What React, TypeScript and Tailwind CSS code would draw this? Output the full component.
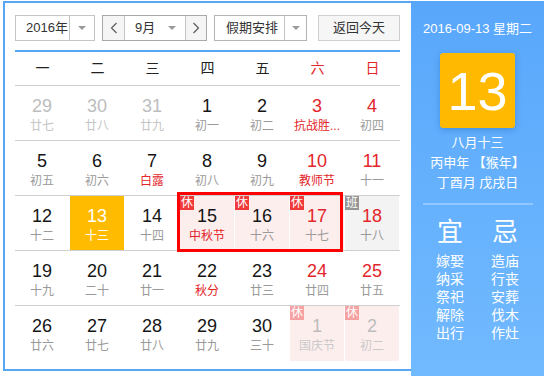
import React from "react";

type Cell = {
  d: string;
  l: string;
  n: string;
  lc: string;
  bg?: string;
  badge?: "xiu" | "ban" | "xiuF";
};

const K = "text-[#151515]";
const R = "text-[#e3262b]";
const P = "text-[#bdbdbd]";
const G = "text-[#9a9a9a]";
const PL = "text-[#c6c6c6]";
const W = "text-white";

const rows: Cell[][] = [
  [
    { d: "29", l: "廿七", n: P, lc: PL },
    { d: "30", l: "廿八", n: P, lc: PL },
    { d: "31", l: "廿九", n: P, lc: PL },
    { d: "1", l: "初一", n: K, lc: G },
    { d: "2", l: "初二", n: K, lc: G },
    { d: "3", l: "抗战胜...", n: R, lc: R },
    { d: "4", l: "初四", n: R, lc: G },
  ],
  [
    { d: "5", l: "初五", n: K, lc: G },
    { d: "6", l: "初六", n: K, lc: G },
    { d: "7", l: "白露", n: K, lc: R },
    { d: "8", l: "初八", n: K, lc: G },
    { d: "9", l: "初九", n: K, lc: G },
    { d: "10", l: "教师节", n: R, lc: R },
    { d: "11", l: "十一", n: R, lc: G },
  ],
  [
    { d: "12", l: "十二", n: K, lc: G },
    { d: "13", l: "十三", n: W, lc: W, bg: "bg-[#ffbb00]" },
    { d: "14", l: "十四", n: K, lc: G },
    { d: "15", l: "中秋节", n: K, lc: R, bg: "bg-[#fdeeee]", badge: "xiu" },
    { d: "16", l: "十六", n: K, lc: G, bg: "bg-[#fdeeee]", badge: "xiu" },
    { d: "17", l: "十七", n: R, lc: G, bg: "bg-[#fdeeee]", badge: "xiu" },
    { d: "18", l: "十八", n: R, lc: G, bg: "bg-[#f3f3f3]", badge: "ban" },
  ],
  [
    { d: "19", l: "十九", n: K, lc: G },
    { d: "20", l: "二十", n: K, lc: G },
    { d: "21", l: "廿一", n: K, lc: G },
    { d: "22", l: "秋分", n: K, lc: R },
    { d: "23", l: "廿三", n: K, lc: G },
    { d: "24", l: "廿四", n: R, lc: G },
    { d: "25", l: "廿五", n: R, lc: G },
  ],
  [
    { d: "26", l: "廿六", n: K, lc: G },
    { d: "27", l: "廿七", n: K, lc: G },
    { d: "28", l: "廿八", n: K, lc: G },
    { d: "29", l: "廿九", n: K, lc: G },
    { d: "30", l: "三十", n: K, lc: G },
    { d: "1", l: "国庆节", n: "text-[#bcbcbc]", lc: "text-[#c9c9c9]", bg: "bg-[#fdeeee]", badge: "xiuF" },
    { d: "2", l: "初二", n: "text-[#bcbcbc]", lc: "text-[#c9c9c9]", bg: "bg-[#fdeeee]", badge: "xiuF" },
  ],
];

const weekdays = ["一", "二", "三", "四", "五", "六", "日"];

function Arrow() {
  return <span className="block w-0 h-0 border-x-[4px] border-x-transparent border-t-[4px] border-t-[#9a9a9a]" />;
}

function Chevron({ dir }: { dir: "l" | "r" }) {
  return (
    <svg width="8" height="12" viewBox="0 0 8 12" fill="none">
      {dir === "l" ? (
        <polyline points="6.5,1 1.5,6 6.5,11" stroke="#555" strokeWidth="1.1" />
      ) : (
        <polyline points="1.5,1 6.5,6 1.5,11" stroke="#555" strokeWidth="1.1" />
      )}
    </svg>
  );
}

function Badge({ kind }: { kind: "xiu" | "ban" | "xiuF" }) {
  const cls =
    kind === "xiu"
      ? "bg-[#f03a3a]"
      : kind === "ban"
      ? "bg-[#949494]"
      : "bg-[#f6a2a2]";
  return (
    <span
      className={`absolute left-0 top-0 w-[14px] h-[14px] ${cls} text-white text-[12px] leading-[14px] flex items-center justify-center`}
    >
      {kind === "ban" ? "班" : "休"}
    </span>
  );
}

export default function App() {
  return (
    <div className="w-[544px] h-[376px] bg-white overflow-hidden font-['Liberation_Sans','Noto_Sans_CJK_SC',sans-serif]">
      <div className="ml-[3px] mt-[1px] w-[541px] h-[375px] border-t-2 border-[#58a6f6] flex">
        {/* Left area */}
        <div className="w-[408px] h-[368px] border-l-2 border-b-2 border-[#58a6f6] pl-[10px] pt-[12px] box-border">
          {/* Controls */}
          <div className="flex h-[26px] text-[13px] text-[#333]">
            <div className="w-[80px] h-full border border-[#c4c4c4] flex">
              <div className="flex-1 flex items-center pl-[10px]">2016年</div>
              <div className="w-[25px] border-l border-[#c4c4c4] flex items-center justify-center">
                <Arrow />
              </div>
            </div>
            <div className="ml-[7px] w-[105px] h-full border border-[#a9a9a9] flex">
              <div className="w-[22px] bg-[#f5f5f5] border-r border-[#c4c4c4] flex items-center justify-center">
                <Chevron dir="l" />
              </div>
              <div className="w-[60px] flex items-center pl-[10px] pr-[9px] justify-between">
                <span>9月</span>
                <Arrow />
              </div>
              <div className="flex-1 bg-[#f5f5f5] border-l border-[#c4c4c4] flex items-center justify-center">
                <Chevron dir="r" />
              </div>
            </div>
            <div className="ml-[7px] w-[93px] h-full border border-[#b4b4b4] flex">
              <div className="flex-1 flex items-center pl-[11px]">假期安排</div>
              <div className="w-[22px] border-l border-[#c4c4c4] flex items-center justify-center">
                <Arrow />
              </div>
            </div>
            <div className="ml-[11px] w-[82px] h-full border border-[#cfcfcf] bg-[#f6f6f6] flex items-center justify-center">
              返回今天
            </div>
          </div>

          {/* Blue line */}
          <div className="mt-[9px] w-[385px] h-[2px] bg-[#58a6f6]" />

          {/* Grid */}
          <div className="relative w-[385px]">
            <div className="grid grid-cols-[repeat(7,55px)] h-[34px] border-b border-[#cfcfcf] text-[14px]">
              {weekdays.map((w, i) => (
                <div
                  key={w}
                  className={`flex items-center justify-center ${i >= 5 ? "text-[#e3262b]" : "text-[#222]"}`}
                >
                  {w}
                </div>
              ))}
            </div>
            {rows.map((row, ri) => (
              <div
                key={ri}
                className={`grid grid-cols-[repeat(7,55px)] h-[55px] ${ri < rows.length - 1 ? "border-b border-[#cfcfcf]" : ""}`}
              >
                {row.map((c, ci) => (
                  <div
                    key={ci}
                    className={`relative w-[54px] h-full flex flex-col items-center pt-[9px] ${c.bg ?? ""}`}
                  >
                    {c.badge && <Badge kind={c.badge} />}
                    <span className={`text-[18px] leading-[22px] ${c.n}`}>{c.d}</span>
                    <span className={`text-[12px] leading-[18px] whitespace-nowrap ${c.lc}`}>{c.l}</span>
                  </div>
                ))}
              </div>
            ))}
            {/* selection box */}
            <div className="absolute left-[162px] top-[140px] w-[166px] h-[60px] border-[3px] border-[#ff0000] pointer-events-none" />
          </div>
        </div>

        {/* Right panel */}
        <div className="w-[133px] h-[376px] -mt-[2px] pt-[2px] bg-linear-to-b from-[#58a7fb] to-[#72baff] text-white flex flex-col items-center">
          <div className="mt-[17px] text-[13px] leading-[18px]">2016-09-13 星期二</div>
          <div className="mt-[15px] w-[75px] h-[75px] rounded-[3px] bg-[#ffb900] shadow-[0_2px_6px_rgba(0,60,140,0.25)] flex items-center justify-center text-[54px] leading-none">
            13
          </div>
          <div className="mt-[5px] text-[13px] leading-[20px] text-center">
            <div>八月十三</div>
            <div>丙申年 【猴年】</div>
            <div>丁酉月 戊戌日</div>
          </div>
          <div className="mt-[10px] w-[110px] h-[2px] bg-[#92c8ff]" />
          <div className="mt-[12px] flex">
            <div className="w-[55px] flex flex-col items-center">
              <div className="text-[26px] leading-[30px]">宜</div>
              <div className="mt-[5px] text-[14px] leading-[18px] flex flex-col items-center">
                <span>嫁娶</span>
                <span>纳采</span>
                <span>祭祀</span>
                <span>解除</span>
                <span>出行</span>
              </div>
            </div>
            <div className="w-[55px] flex flex-col items-center">
              <div className="text-[26px] leading-[30px]">忌</div>
              <div className="mt-[5px] text-[14px] leading-[18px] flex flex-col items-center">
                <span>造庙</span>
                <span>行丧</span>
                <span>安葬</span>
                <span>伐木</span>
                <span>作灶</span>
              </div>
            </div>
          </div>
        </div>
      </div>
    </div>
  );
}
